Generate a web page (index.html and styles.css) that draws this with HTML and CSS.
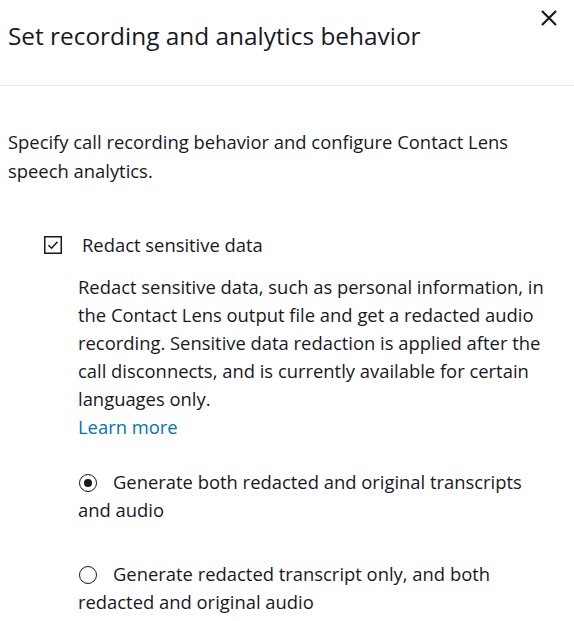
FILE: index.html
```html
<!DOCTYPE html>
<html>
<head>
<meta charset="utf-8">
<link rel="stylesheet" href="styles.css">
</head>
<body>
<div class="modal">
  <header class="header">
    <h2 class="title">Set recording and analytics behavior</h2>
    <button class="close" aria-label="Close">
      <svg width="18" height="18" viewBox="0 0 18 18"><path d="M2 2 L16 16 M16 2 L2 16" stroke="#16191f" stroke-width="2.2" fill="none"/></svg>
    </button>
  </header>
  <div class="content">
    <p class="intro">Specify call recording behavior and configure Contact Lens speech analytics.</p>
    <div class="option">
      <label class="check-row">
        <span class="checkbox">
          <svg width="18" height="18" viewBox="0 0 18 18"><rect x="0.75" y="0.75" width="16.5" height="16.5" fill="#fff" stroke="#16191f" stroke-width="1.5"/><path d="M4.5 9.2 L7.6 12.2 L13.5 5.8" stroke="#16191f" stroke-width="1.6" fill="none"/></svg>
        </span>
        <span class="check-label">Redact sensitive data</span>
      </label>
      <div class="desc">
        <p>Redact sensitive data, such as personal information, in the Contact Lens output file and get a redacted audio recording. Sensitive data redaction is applied after the call disconnects, and is currently available for certain languages only.</p>
        <a class="link" href="#">Learn more</a>
        <div class="radios">
          <label class="radio-row"><span class="radio checked"></span>Generate both redacted and original transcripts and audio</label>
          <label class="radio-row"><span class="radio"></span>Generate redacted transcript only, and both redacted and original audio</label>
        </div>
      </div>
    </div>
  </div>
</div>
</body>
</html>
```
FILE: styles.css
```css
* { box-sizing: border-box; }
html, body { margin: 0; padding: 0; background: #fff; }
body {
  font-family: "Open Sans", "Noto Sans", sans-serif;
  color: #16191f;
}
.modal { width: 574px; }
.header {
  display: flex;
  justify-content: space-between;
  align-items: flex-start;
  padding: 19px 16px 0 8px;
  height: 86px;
  border-bottom: 1px solid #eaeded;
}
.title {
  margin: 0;
  font-weight: 400;
  font-size: 24.4px;
  line-height: 34px;
}
.close {
  border: 0;
  background: none;
  padding: 0;
  margin-top: -10px;
  width: 18px;
  height: 18px;
  cursor: pointer;
}
.close svg { display: block; }
.content { padding: 41px 8px 0 8px; }
.intro {
  margin: 0;
  font-size: 18.4px;
  line-height: 29px;
}
.option { padding: 46px 0 0 36px; }
.check-row { display: flex; align-items: center; gap: 20px; }
.checkbox svg { display: block; }
.check-label { font-size: 18.4px; line-height: 28px; }
.desc { padding: 14px 0 0 34px; font-size: 18.4px; line-height: 28px; }
.desc p { margin: 0; }
.link { color: #0073bb; text-decoration: none; }
.radios { padding: 27px 16px 0 0; display: flex; flex-direction: column; gap: 36px; }
.radio-row { display: block; }
.radio {
  display: inline-block;
  width: 18px;
  height: 18px;
  border: 1.5px solid #16191f;
  border-radius: 50%;
  margin: 0 16px 0 1px;
  vertical-align: -3px;
  position: relative;
}
.radio.checked::after {
  content: "";
  position: absolute;
  left: 3.5px; top: 3.5px;
  width: 8px; height: 8px;
  border-radius: 50%;
  background: #16191f;
}
```
